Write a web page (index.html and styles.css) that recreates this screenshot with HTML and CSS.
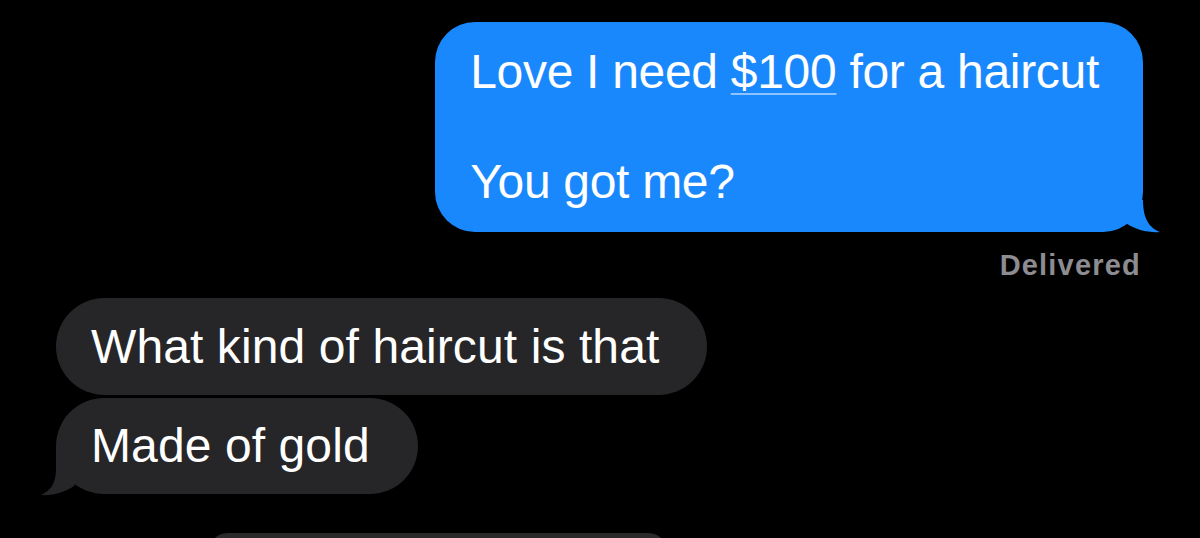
FILE: index.html
```html
<!DOCTYPE html>
<html lang="en">
<head>
<meta charset="utf-8">
<title>Messages</title>
<link rel="stylesheet" href="styles.css">
</head>
<body>
<div class="thread">
  <div class="row sent">
    <div class="bubble blue">Love I need <span class="link">$100</span> for a haircut<br><br>You got me?<svg class="tail tail-right" width="50" height="40" viewBox="0 0 50 40"><path d="M30,6 C30,26 37,34 47,38 C37,39 22,36 13,29 L7,6 Z" fill="#1a88fd"/></svg></div>
  </div>
  <div class="status">Delivered</div>
  <div class="row recv first">
    <div class="bubble gray">What kind of haircut is that</div>
  </div>
  <div class="row recv second">
    <div class="bubble gray">Made of gold<svg class="tail tail-left" width="60" height="58" viewBox="0 0 60 58"><path d="M20,7 L20,30 C20,45 14,52 5,56 C17,57 29,53 38,47 L54,20 Z" fill="#262629"/></svg></div>
  </div>
  <div class="row next">
    <div class="peek"></div>
  </div>
</div>
</body>
</html>
```
FILE: styles.css
```css
html, body {
  margin: 0;
  padding: 0;
  background: #000;
}
.thread {
  display: flex;
  flex-direction: column;
  height: 538px;
  box-sizing: border-box;
  overflow: hidden;
  padding-top: 22px;
  font-family: "Liberation Sans", Arial, sans-serif;
}
.row {
  display: flex;
  flex-shrink: 0;
}
.sent {
  justify-content: flex-end;
  padding-right: 57px;
}
.bubble {
  position: relative;
  font-size: 48px;
  line-height: 55px;
  color: #fff;
}
.blue {
  background: #1a88fd;
  border-radius: 40px;
  padding: 22px 44px 23px 35px;
  letter-spacing: -0.3px;
}
.link {
  text-decoration: underline;
  text-decoration-color: rgba(255, 255, 255, 0.5);
  text-decoration-thickness: 2px;
  text-underline-offset: 5px;
}
.tail {
  position: absolute;
  display: block;
}
.tail-right {
  right: -20px;
  bottom: -2px;
}
.tail-left {
  left: -20px;
  bottom: -3px;
}
.status {
  flex-shrink: 0;
  margin-top: 16px;
  padding-right: 59px;
  text-align: right;
  font-size: 29px;
  line-height: 34px;
  font-weight: bold;
  letter-spacing: 1.2px;
  color: #8c8c91;
}
.recv {
  padding-left: 56px;
}
.recv.first {
  margin-top: 16px;
}
.recv.second {
  margin-top: 3px;
}
.gray {
  background: #262629;
  border-radius: 49px;
  padding: 21px 48px 21px 35px;
  letter-spacing: 0.1px;
}
.second .gray {
  padding: 20px 48px 21px 35px;
}
.next {
  margin-top: 39px;
  padding-left: 208px;
}
.peek {
  width: 460px;
  height: 40px;
  border-radius: 24px;
  background: #2a2a2c;
}
```
